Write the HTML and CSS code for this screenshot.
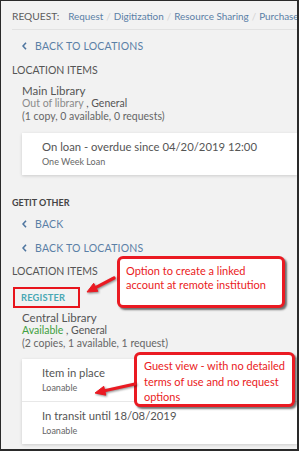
FILE: index.html
```html
<!DOCTYPE html>
<html lang="en">
<head>
    <meta charset="UTF-8">
    <title>Get It</title>
    <link rel="stylesheet" href="styles.css">
</head>
<body>
    <div class="frame">
        <div class="request-bar">
            <span class="request-label">REQUEST:</span>
            <a class="req-link">Request</a><span class="sep">/</span>
            <a class="req-link">Digitization</a><span class="sep">/</span>
            <a class="req-link">Resource Sharing</a><span class="sep">/</span>
            <a class="req-link">Purchase</a>
        </div>

        <div class="section">
            <a class="back-link">
                <svg class="chev" width="5" height="8" viewBox="0 0 5 8"><polyline points="4,0.8 1,4 4,7.2" fill="none" stroke="#4f76a0" stroke-width="1.6"/></svg>
                BACK TO LOCATIONS
            </a>
            <div class="section-title">LOCATION ITEMS</div>
            <div class="location">
                <div class="loc-name">Main Library</div>
                <div class="loc-status"><span class="muted">Out of library</span> , General</div>
                <div class="loc-count">(1 copy, 0 available, 0 requests)</div>
            </div>
            <div class="items">
                <div class="item">
                    <div class="item-status">On loan - overdue since 04/20/2019 12:00</div>
                    <div class="item-policy">One Week Loan</div>
                </div>
            </div>
        </div>

        <div class="section other">
            <div class="other-title">GETIT OTHER</div>
            <a class="back-link first">
                <svg class="chev" width="5" height="8" viewBox="0 0 5 8"><polyline points="4,0.8 1,4 4,7.2" fill="none" stroke="#4f76a0" stroke-width="1.6"/></svg>
                BACK
            </a>
            <a class="back-link">
                <svg class="chev" width="5" height="8" viewBox="0 0 5 8"><polyline points="4,0.8 1,4 4,7.2" fill="none" stroke="#4f76a0" stroke-width="1.6"/></svg>
                BACK TO LOCATIONS
            </a>
            <div class="section-title">LOCATION ITEMS</div>
            <div class="register"><span class="register-text">REGISTER</span></div>
            <div class="location tight">
                <div class="loc-name">Central Library</div>
                <div class="loc-status"><span class="available">Available</span> , General</div>
                <div class="loc-count">(2 copies, 1 available, 1 request)</div>
            </div>
            <div class="items">
                <div class="item">
                    <div class="item-status">Item in place</div>
                    <div class="item-policy">Loanable</div>
                </div>
                <div class="item divided">
                    <div class="item-status">In transit until 18/08/2019</div>
                    <div class="item-policy">Loanable</div>
                </div>
            </div>
        </div>

        <div class="callout callout-one">Option to create a linked<br>account at remote institution</div>
        <div class="callout callout-two">Guest view - with no detailed<br>terms of use and no request<br>options</div>

        <svg class="arrow arrow-one" width="40" height="30" viewBox="0 0 40 30">
            <line x1="33" y1="9" x2="15" y2="18.3" stroke="#ea1a22" stroke-width="3.2" stroke-linecap="round"/>
            <polygon points="6,23 12.7,14.3 16.9,22.3" fill="#ea1a22" stroke="#ea1a22" stroke-width="1" stroke-linejoin="round"/>
        </svg>
        <svg class="arrow arrow-two" width="48" height="24" viewBox="0 0 48 24">
            <line x1="46" y1="7" x2="15.5" y2="13.75" stroke="#ea1a22" stroke-width="3.2" stroke-linecap="round"/>
            <polygon points="6,16 14.75,9.35 16.75,18.15" fill="#ea1a22" stroke="#ea1a22" stroke-width="1" stroke-linejoin="round"/>
        </svg>
    </div>
</body>
</html>
```

FILE: styles.css
```css
html, body {
    margin: 0;
    padding: 0;
}

body {
    font-family: Lato, "Open Sans", sans-serif;
    background-color: #fff;
}

.frame {
    position: relative;
    width: 299px;
    height: 451px;
    box-sizing: border-box;
    border: 1px solid #2a2a2a;
    border-right-width: 2px;
    border-bottom-width: 2px;
    background-color: #f2f2f2;
    overflow: hidden;
    color: #575757;
    white-space: nowrap;
}

/* barre des demandes */
.request-bar {
    display: flex;
    align-items: center;
    margin-left: 11px;
    padding: 7px 0 6px;
    height: 15px;
    border-bottom: 1px solid #e2e2e2;
}

.request-label {
    font-size: 10.2px;
    color: #5c5c5c;
    margin-right: 9px;
}

.req-link {
    font-size: 9.9px;
    color: #5a7fa6;
}

.sep {
    font-size: 9.9px;
    color: #d4d4d4;
    margin: 0 3px;
}

.section {
    padding-left: 11px;
}

.back-link {
    display: flex;
    align-items: center;
    margin: 9px 0 0 10px;
    height: 14px;
    color: #5a7fa6;
    font-size: 10.5px;
    letter-spacing: 0.2px;
}

.chev {
    margin-right: 8px;
}

.section-title {
    margin-top: 10px;
    height: 14px;
    line-height: 14px;
    font-size: 10.5px;
    color: #555;
}

.location {
    margin: 7px 0 0 10px;
}

.location.tight {
    margin-top: 3px;
}

.loc-name {
    font-size: 11.5px;
    line-height: 13px;
    color: #555;
}

.loc-status {
    font-size: 10.5px;
    line-height: 13px;
    color: #555;
}

.loc-count {
    font-size: 10.5px;
    line-height: 12px;
    color: #666;
}

.muted {
    color: #8a8a8a;
}

.available {
    color: #41a041;
}

.items {
    margin: 11px 0 0 10px;
    background-color: #fff;
    box-shadow: 0 1px 3px rgba(0, 0, 0, 0.16);
}

.item {
    padding: 6px 20px 7px;
}

.item.divided {
    border-top: 1px solid #e8e8e8;
}

.item-status {
    font-size: 11.3px;
    line-height: 16px;
    color: #555;
}

.item-policy {
    font-size: 9px;
    line-height: 12px;
    margin-top: 1px;
    color: #666;
}

.other {
    margin-top: 22px;
}

.other-title {
    font-size: 9px;
    line-height: 12px;
    font-weight: bold;
    color: #444;
}

.back-link.first {
    margin-top: 8px;
}

.other .back-link + .back-link {
    margin-top: 10px;
}

.other .section-title {
    margin-top: 9px;
}

.register {
    margin: 9px 0 0 1px;
    width: 67px;
    height: 21px;
    box-sizing: border-box;
    border: 2px solid #e8141c;
    display: flex;
    align-items: center;
    padding-left: 6px;
}

.register-text {
    color: #4aa8b4;
    font-size: 9.3px;
    font-weight: bold;
    letter-spacing: 0.2px;
}

.other .items {
    margin-top: 10px;
}

/* bulles d'annotation */
.callout {
    position: absolute;
    box-sizing: border-box;
    background-color: #fff;
    border: 3px solid #ea1a22;
    border-radius: 6px;
    box-shadow: 2px 2px 2px rgba(0, 0, 0, 0.55);
    color: #ea1a22;
    font-size: 11px;
}

.callout-one {
    left: 116px;
    top: 255px;
    width: 168px;
    height: 52px;
    padding: 5px 0 0 6px;
    line-height: 14px;
}

.callout-two {
    left: 133px;
    top: 351px;
    width: 161px;
    height: 55px;
    padding: 3px 0 0 7px;
    line-height: 15.5px;
}

.arrow {
    position: absolute;
    filter: drop-shadow(1px 1px 1px rgba(0, 0, 0, 0.45));
}

.arrow-one {
    left: 80px;
    top: 268px;
}

.arrow-two {
    left: 88px;
    top: 376px;
}
```
